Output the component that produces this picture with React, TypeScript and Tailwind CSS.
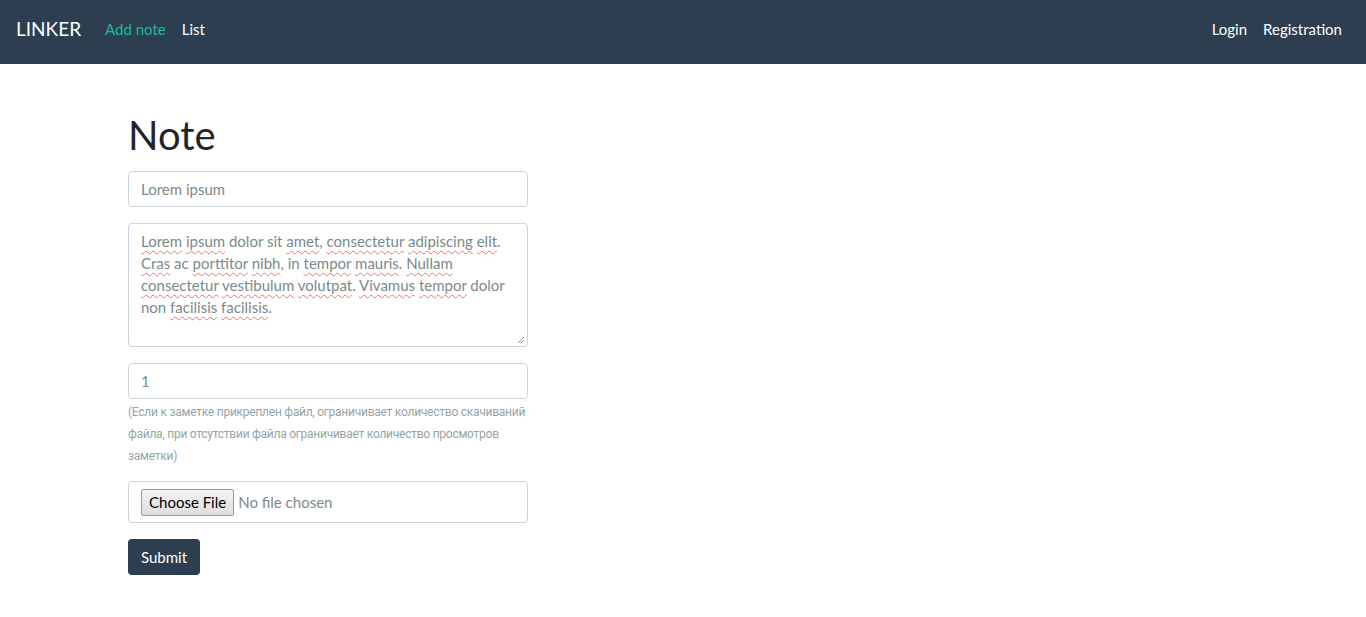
import { useState } from "react";

const words: { t: string; bad?: boolean }[] = [
  { t: "Lorem", bad: true }, { t: " " }, { t: "ipsum", bad: true }, { t: " dolor sit " },
  { t: "amet", bad: true }, { t: ", " }, { t: "consectetur", bad: true }, { t: " " },
  { t: "adipiscing", bad: true }, { t: " " }, { t: "elit", bad: true }, { t: ". " },
  { t: "Cras", bad: true }, { t: " ac " }, { t: "porttitor", bad: true }, { t: " " },
  { t: "nibh", bad: true }, { t: ", in " }, { t: "tempor", bad: true }, { t: " " },
  { t: "mauris", bad: true }, { t: ". " }, { t: "Nullam", bad: true }, { t: " " },
  { t: "consectetur", bad: true }, { t: " " }, { t: "vestibulum", bad: true }, { t: " " },
  { t: "volutpat", bad: true }, { t: ". " }, { t: "Vivamus", bad: true }, { t: " " },
  { t: "tempor", bad: true }, { t: " dolor non " }, { t: "facilisis", bad: true }, { t: " " },
  { t: "facilisis", bad: true }, { t: "." },
];

export default function App() {
  const [title, setTitle] = useState("Lorem ipsum");
  const [count, setCount] = useState("1");

  return (
    <div className="min-h-screen bg-white font-['Lato',sans-serif] text-[15px]">
      {/* Navbar */}
      <nav className="flex h-16 items-center bg-[#2c3e50] px-4 pb-[6px]">
        <a href="#" className="mr-4 text-[19px] text-white">LINKER</a>
        <ul className="flex items-center">
          <li><a href="#" className="px-2 text-[#18bc9c]">Add note</a></li>
          <li><a href="#" className="px-2 text-white">List</a></li>
        </ul>
        <ul className="ml-auto flex items-center">
          <li><a href="#" className="px-2 text-white">Login</a></li>
          <li><a href="#" className="px-2 text-white">Registration</a></li>
        </ul>
      </nav>

      {/* Form */}
      <main className="mx-auto w-[1140px] px-[15px] pt-[47px]">
        <div className="w-[400px]">
          <h1 className="mb-[12px] text-[40px] leading-[48px] text-[#212529]">Note</h1>

          <input
            type="text"
            value={title}
            onChange={(e) => setTitle(e.target.value)}
            className="block h-[36px] w-full rounded-[4px] border border-[#ced4da] px-3 text-[#7b8a8b] outline-none"
          />

          <div className="relative mt-4 h-[124px] w-full rounded-[4px] border border-[#ced4da] px-3 py-[6px] leading-[22px] text-[#7b8a8b]" role="textbox">
            {words.map((w, i) =>
              w.bad ? (
                <span key={i} className="underline decoration-[#f07070] decoration-wavy decoration-1 underline-offset-[3px]">{w.t}</span>
              ) : (
                <span key={i}>{w.t}</span>
              )
            )}
            <svg className="absolute bottom-[2px] right-[2px]" width="8" height="8" viewBox="0 0 8 8">
              <path d="M7 1 L1 7 M7 4 L4 7" stroke="#8a8a8a" strokeWidth="1" />
            </svg>
          </div>

          <input
            type="number"
            value={count}
            onChange={(e) => setCount(e.target.value)}
            className="mt-4 block h-[36px] w-full rounded-[4px] border border-[#ced4da] px-3 text-[#7b8a8b] outline-none [appearance:textfield]"
          />
          <small className="mt-[2px] block font-['Roboto',sans-serif] text-[12px] leading-[22px] tracking-[-0.25px] text-[#95a5a6]">
            (Если к заметке прикреплен файл, ограничивает количество скачиваний файла, при отсутствии файла ограничивает количество просмотров заметки)
          </small>

          <div className="mt-[14px] flex h-[42px] w-full items-center rounded-[4px] border border-[#ced4da] px-3">
            <button className="h-[27px] rounded-[2px] border border-[#9a9a9a] bg-gradient-to-b from-[#f4f4f4] to-[#dedede] px-[7px] text-[15px] text-black">
              Choose File
            </button>
            <span className="ml-[4px] text-[#7b8a8b]">No file chosen</span>
          </div>

          <button className="mt-4 h-[36px] rounded-[4px] bg-[#2c3e50] px-[13px] text-white">Submit</button>
        </div>
      </main>
    </div>
  );
}
